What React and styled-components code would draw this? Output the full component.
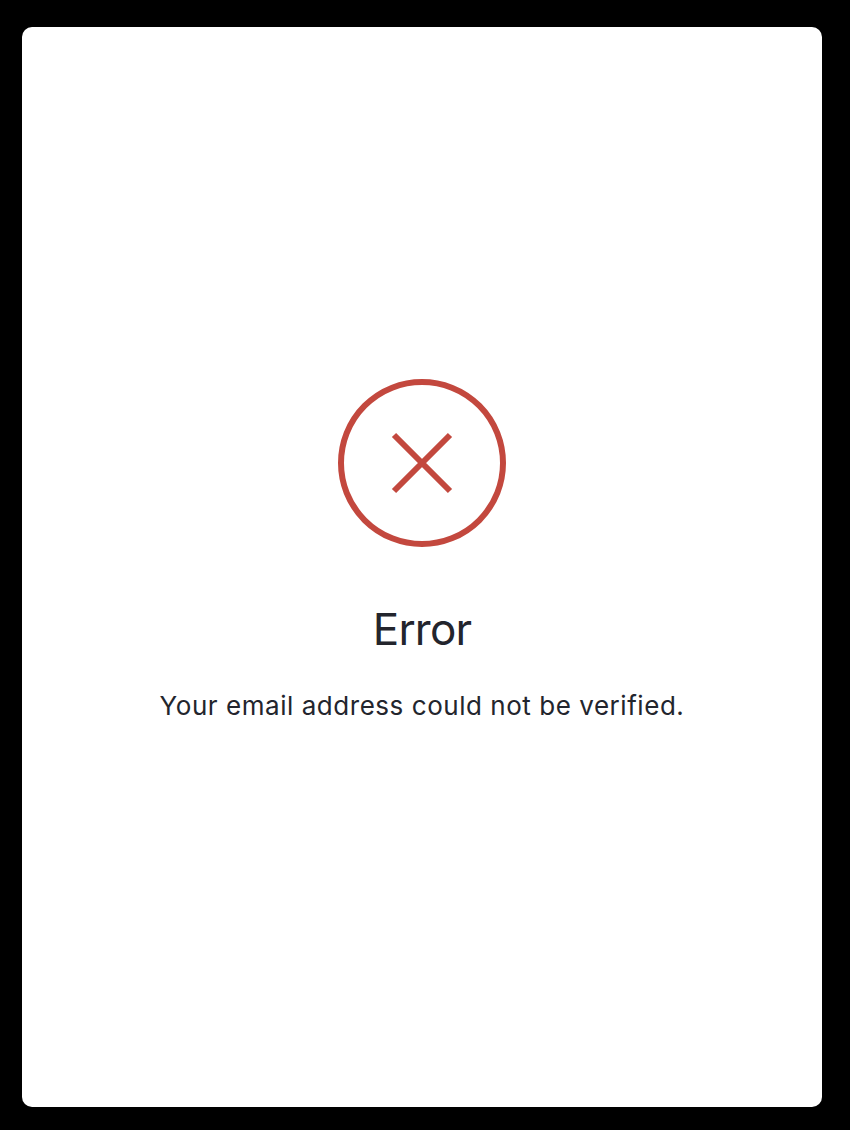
import React from 'react';
import styled, { createGlobalStyle } from 'styled-components';

const GlobalStyle = createGlobalStyle`
	html, body {
		margin: 0;
		padding: 0;
		background: #000;
	}
`

const App = () => {
	return (
		<>
			<GlobalStyle />
			<PageWrapper>
				<Card>
					<ErrorIcon viewBox="0 0 168 168" aria-hidden="true">
						<circle cx="84" cy="84" r="81" fill="none" stroke="#c3483e" strokeWidth="6" />
						<path d="M56 56 L112 112 M112 56 L56 112" fill="none" stroke="#c3483e" strokeWidth="6" />
					</ErrorIcon>
					<Title>Error</Title>
					<Message>Your email address could not be verified.</Message>
				</Card>
			</PageWrapper>
		</>
	)
}

const PageWrapper = styled.div`
	width: 850px;
	height: 1130px;
	box-sizing: border-box;
	padding: 27px 28px 23px 22px;
	background: #000;
`
const Card = styled.div`
	height: 100%;
	display: flex;
	flex-direction: column;
	align-items: center;
	padding-top: 352px;
	box-sizing: border-box;
	background: #fff;
	border-radius: 10px;
	font-family: "Inter", "Liberation Sans", sans-serif;
	color: #23252d;
`
const ErrorIcon = styled.svg`
	width: 168px;
	height: 168px;
	display: block;
`
const Title = styled.h1`
	margin: 55px 0 0;
	font-size: 44px;
	line-height: 54px;
	font-weight: 400;
	letter-spacing: -0.8px;
`
const Message = styled.p`
	margin: 33px 0 0;
	font-size: 26px;
	line-height: 34px;
	font-weight: 400;
	letter-spacing: 0.54px;
`

export default App
